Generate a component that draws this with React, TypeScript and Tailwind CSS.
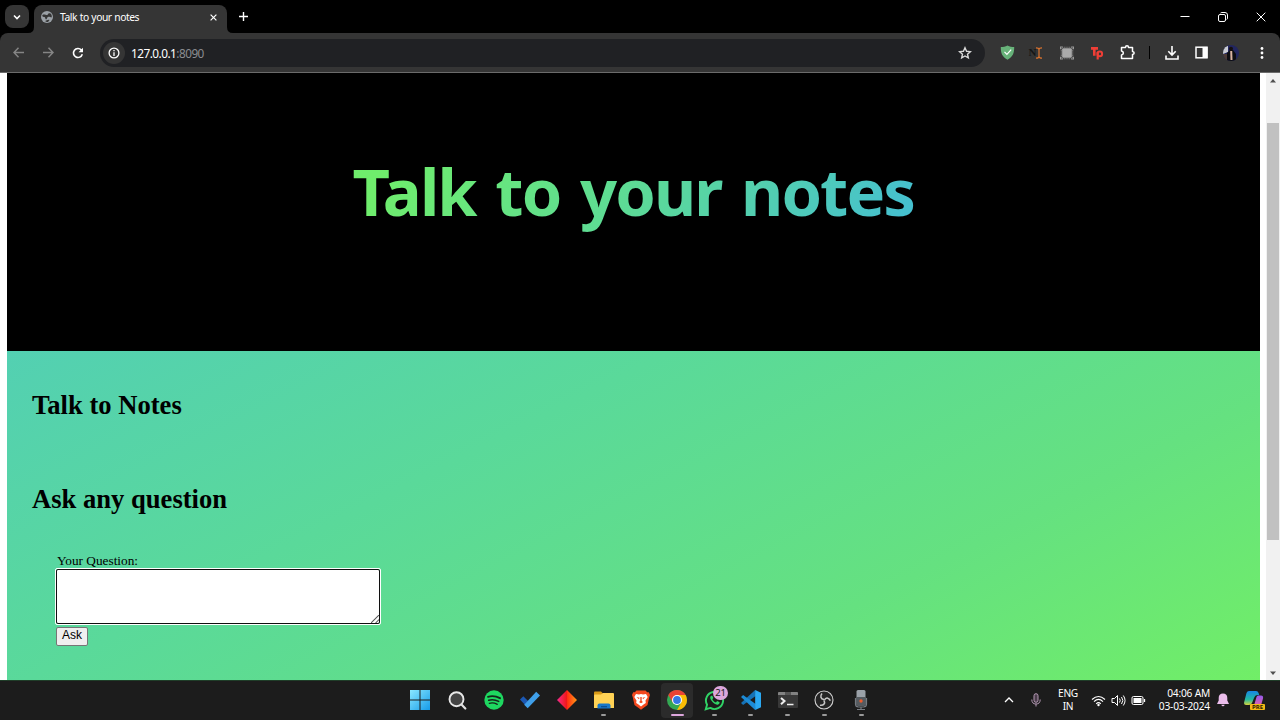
import type { ReactNode } from "react";

function Svg({ s = 16, vb = "0 0 24 24", className = "", children }: { s?: number; vb?: string; className?: string; children: ReactNode }) {
  return (
    <svg width={s} height={s} viewBox={vb} fill="none" className={`block shrink-0 ${className}`}>
      {children}
    </svg>
  );
}

function Slot({ children, className = "w-[30px]" }: { children: ReactNode; className?: string }) {
  return <div className={`flex h-8 shrink-0 items-center justify-center ${className}`}>{children}</div>;
}

function TabStrip() {
  return (
    <div className="flex h-[33px] shrink-0 items-start bg-black text-white">
      <div className="mt-[5px] ml-[5px] flex h-[23px] w-6 items-center justify-center rounded-[8px] bg-[#353535]">
        <Svg s={8} vb="0 0 8 8">
          <path d="M1 2.5 4 5.5 7 2.5" stroke="#fff" strokeWidth="1.6" />
        </Svg>
      </div>
      <div className="mt-[5px] flex h-[28px] items-end">
        <Svg s={6} vb="0 0 6 6" className="-ml-px">
          <path d="M6 0v6H0q6 0 6-6" fill="#353535" />
        </Svg>
        <div className="flex h-[28px] w-[193px] items-center rounded-t-[8px] bg-[#353535] pb-[4px] pl-[7px]">
          <Svg s={12} vb="0 0 24 24">
            <circle cx="12" cy="12" r="12" fill="#9aa0a6" />
            <path d="M4 7c5-1 6 2 9 1 1-3 3-4 6-3 3 3 3 6 2 8-3 0-4-2-7-1-3 1-1 4-4 5-2-1-1-4-3-5-2 0-4-1-5-2zM8 20c3-1 6-4 9-2l-3 4c-3 0-5-1-6-2z" fill="#353535" />
          </Svg>
          <span className="mt-px ml-[7px] w-[150px] font-['Noto_Sans','Open_Sans',sans-serif] text-[10.3px] tracking-[-0.45px] [word-spacing:0.4px] whitespace-nowrap">Talk to your notes</span>
          <Svg s={7} vb="0 0 7 7">
            <path d="M.6.6 6.4 6.4M6.4.6.6 6.4" stroke="#fff" strokeWidth="1.2" />
          </Svg>
        </div>
        <Svg s={6} vb="0 0 6 6">
          <path d="M0 0v6h6Q0 6 0 0" fill="#353535" />
        </Svg>
      </div>
      <Svg s={9} vb="0 0 9 9" className="mt-[12px] ml-[6px]">
        <path d="M4.5 0v9M0 4.5h9" stroke="#fff" strokeWidth="1.4" />
      </Svg>
      <div className="mr-[14px] ml-auto flex h-[33px] items-center gap-[28px]">
        <Svg s={10} vb="0 0 10 10">
          <path d="M.5 4.5h9" stroke="#fff" />
        </Svg>
        <Svg s={10} vb="0 0 10 10">
          <rect x=".5" y="2.5" width="7" height="7" rx="1.5" stroke="#fff" />
          <path d="M2.5 1Q3 .5 4 .5h3Q9.5.5 9.5 3v3q0 1-.8 1.6" stroke="#fff" />
        </Svg>
        <Svg s={10} vb="0 0 10 10">
          <path d="m.7.7 8.6 8.6M9.3.7.7 9.3" stroke="#fff" />
        </Svg>
      </div>
    </div>
  );
}

function Toolbar() {
  return (
    <div className="bg-black">
      <div className="flex h-[40px] items-center rounded-t-[8px] border-b border-[#6b6b6b] bg-[#353535] pl-[3px]">
        <Slot>
          <Svg s={11} vb="0 0 10 10">
            <path d="M5 .6.9 5 5 9.4M1 5h9" stroke="#858585" strokeWidth="1.3" />
          </Svg>
        </Slot>
        <Slot>
          <Svg s={11} vb="0 0 10 10">
            <path d="M5 .6 9.1 5 5 9.4M9 5H0" stroke="#858585" strokeWidth="1.3" />
          </Svg>
        </Slot>
        <Slot>
          <Svg s={12} vb="0 0 12 12">
            <path d="M10.3 7.3A4.5 4.5 0 1 1 9.3 2.9L10.5 4" stroke="#fff" strokeWidth="1.6" />
            <path d="M11 .8v4.5H6.5z" fill="#fff" />
          </Svg>
        </Slot>
        <div className="ml-[7px] flex h-[28px] w-[885px] items-center rounded-full bg-[#202124] pl-[3px]">
          <div className="flex size-[22px] items-center justify-center rounded-full bg-[#353535]">
            <Svg s={12} vb="0 0 12 12">
              <circle cx="6" cy="6" r="4.9" stroke="#fff" strokeWidth="1.3" />
              <path d="M6 5.2V9M6 3v1.3" stroke="#fff" strokeWidth="1.3" />
            </Svg>
          </div>
          <span className="mt-[2px] ml-[6px] font-['Noto_Sans','Open_Sans',sans-serif] text-[11.8px] tracking-[-0.52px] text-white">
            127.0.0.1<span className="text-[#8b8d91]">:8090</span>
          </span>
          <Svg s={14} vb="0 0 24 24" className="mr-[13px] ml-auto">
            <path d="m12 3 2.7 6 6.5.7-4.9 4.3 1.4 6.4L12 17.1l-5.7 3.3 1.4-6.4-4.9-4.3 6.5-.7z" stroke="#d8d8d8" strokeWidth="2.4" />
          </Svg>
        </div>
        <div className="ml-[7px] flex items-center">
          <Slot>
            <Svg s={15} vb="0 0 15 15">
              <path d="M7.5.4C9.5 1.5 12 2 14.2 2c0 6-1 9.5-6.7 12.7C1.8 11.5.8 8 .8 2 3 2 5.5 1.5 7.5.4z" fill="#67b279" />
              <path d="m4.5 6.8 2.4 2.5 4.3-4.7" stroke="#fff" strokeWidth="1.2" />
            </Svg>
          </Slot>
          <Slot>
            <div className="flex items-center">
              <span className="font-['Liberation_Serif',serif] text-[11px] leading-none font-bold text-[#161616]">N</span>
              <Svg s={12} vb="2 0 8 12" className="-ml-[3px]">
                <path d="M3 .8q3 0 3 1.700v7q0 1.700-3 1.700M9 .8q-3 0-3 1.700M9 11.200q-3 0-3-1.700" stroke="#d9722e" strokeWidth="1.2" />
              </Svg>
            </div>
          </Slot>
          <Slot>
            <Svg s={14} vb="0 0 13 13">
              <path d="M.5 3V1h2M10.5 1h2v2M12.5 10v2h-2M2.5 12h-2v-2" stroke="#999" />
              <rect x="2" y="2" width="9" height="9" rx="1" fill="#aaa" />
              <path d="M2 1.2h9M2 11.8h9M1.2 2v9M11.800 2v9" stroke="#909090" strokeDasharray="1 1" />
            </Svg>
          </Slot>
          <Slot>
            <Svg s={14} vb="0 0 14 14">
              <path d="M1 2.4h7M4.3 2.4v7.3" stroke="#ef3e36" strokeWidth="2.6" />
              <circle cx="9.800" cy="7.900" r="2.300" stroke="#ef3e36" strokeWidth="2" />
              <path d="M7.7 6v7.5" stroke="#ef3e36" strokeWidth="2.200" />
            </Svg>
          </Slot>
          <Slot>
            <Svg s={15} vb="0 0 15 15">
              <path d="M1.5 2.5h4c0-2.200 3-2.200 3 0h4v4c2.200.2 2.200 2.800 0 3v4h-11v-3.500c2.500-.3 2.500-3.500 0-4z" stroke="#fff" strokeWidth="1.5" strokeLinejoin="round" />
            </Svg>
          </Slot>
          <Slot className="w-[14px]">
            <div className="h-[13px] w-px bg-black" />
          </Slot>
          <Slot className="w-[31px]">
            <Svg s={14} vb="0 0 14 14">
              <path d="M7 0v8.5M3.3 5.3 7 9l3.7-3.7M1 9.5V13h12V9.5" stroke="#fff" strokeWidth="1.6" />
            </Svg>
          </Slot>
          <Slot className="w-[29px]">
            <Svg s={13} vb="0 0 13 13">
              <rect x="1" y="1.2" width="11" height="10.6" stroke="#fff" strokeWidth="1.5" />
              <path d="M7.5 1h5v11h-5z" fill="#fff" />
            </Svg>
          </Slot>
          <Slot>
            <Svg s={16} vb="0 0 16 16" className="overflow-hidden rounded-full">
              <path d="M0 0h16v16H0z" fill="#22265f" />
              <path d="M0 2 5 1v6L0 9z" fill="#c9ccd2" />
              <path d="M0 9h5v7H0z" fill="#4b3a36" />
              <path d="M4 16V8l3-3h3l3 4v7z" fill="#0d0d12" />
              <circle cx="8" cy="3.7" r="2" fill="#150f10" />
              <path d="m7.2 6 2 0 .3 9H7.5z" fill="#d9b3a2" />
            </Svg>
          </Slot>
          <Slot className="w-[31px]">
            <Svg s={14} vb="0 0 14 14">
              <g fill="#fff">
                <circle cx="7" cy="2.5" r="1.4" />
                <circle cx="7" cy="7" r="1.4" />
                <circle cx="7" cy="11.5" r="1.4" />
              </g>
            </Svg>
          </Slot>
        </div>
      </div>
    </div>
  );
}

function Page() {
  return (
    <div className="flex h-[607px] bg-white">
      <div className="ml-[7px] flex w-[1252.5px] flex-col">
        <div className="flex h-[278px] shrink-0 justify-center bg-black pt-[72px]">
          <h1 className="h-[92px] bg-linear-[120deg,#6fed6c_8%,#5cda98_52%,#45c0d0_97%] bg-clip-text font-['Noto_Sans','Open_Sans',sans-serif] text-[65px] leading-[92px] font-bold tracking-[-1.9px] [word-spacing:4.6px] whitespace-nowrap text-transparent">
            Talk to your notes
          </h1>
        </div>
        <div className="flex-1 bg-linear-[153deg,#53d0b2_0%,#5ad99a_35%,#65e180_71%,#71ee67_100%] pl-[25px] font-['Liberation_Serif','Times_New_Roman',serif] text-black">
          <h2 className="pt-[39px] text-[26.6px] leading-[30px] font-bold">Talk to Notes</h2>
          <h2 className="mt-[64px] text-[26.6px] leading-[30px] font-bold">Ask any question</h2>
          <form className="mt-[40px] flex flex-col items-start pl-[23px]" onSubmit={(e) => e.preventDefault()}>
            <label className="pl-[2px] text-[13.3px] leading-[14px]">Your Question:</label>
            <div className="rounded-[2px] border border-white">
              <div className="flex h-[55px] w-[324px] items-end justify-end rounded-[2px] border-[1.5px] border-[#101010] bg-white">
                <Svg s={8} vb="0 0 7 7">
                  <path d="M0 7 7 0M4 7l3-3" stroke="#555" strokeWidth=".9" />
                </Svg>
              </div>
            </div>
            <button className="mt-[2px] ml-px h-[19px] w-[32px] rounded-[2px] border border-[#767676] bg-[#efefef] pb-[2px] font-['Liberation_Sans',sans-serif] text-[12px] leading-[15px]">Ask</button>
          </form>
        </div>
      </div>
      <div className="ml-auto flex w-[14px] flex-col items-center bg-[#f1f1f1]">
        <Svg s={6} vb="0 0 6 6" className="mt-[5px]">
          <path d="M0 4.5 3 1l3 3.5z" fill="#505050" />
        </Svg>
        <div className="mt-[39px] h-[417px] w-[12px] bg-[#c1c1c1]" />
        <Svg s={6} vb="0 0 6 6" className="mt-auto mb-[4px]">
          <path d="M0 1.5 3 5l3-3.5z" fill="#505050" />
        </Svg>
      </div>
    </div>
  );
}

function TaskIcon({ children, state }: { children: ReactNode; state?: "open" | "active" }) {
  return (
    <div className={`relative flex h-[35px] w-[32px] shrink-0 items-center justify-center rounded-[4px] ${state === "active" ? "bg-[#2b2b2b]" : ""}`}>
      {children}
      {state === "open" && <span className="absolute bottom-[2px] h-[2px] w-[5px] rounded-full bg-[#9a9a9a]" />}
      {state === "active" && <span className="absolute bottom-[2px] h-[2px] w-[13px] rounded-full bg-[#dca6dc]" />}
    </div>
  );
}

function Taskbar() {
  return (
    <div className="flex h-[40px] items-center border-t border-[#1f3d28] bg-[#1c1c1c] pb-px font-['Noto_Sans','Open_Sans',sans-serif] text-white">
      <div className="ml-[404px] flex gap-[4.75px]">
        <TaskIcon>
          <Svg s={20} vb="0 0 20 20">
            <defs>
              <linearGradient id="win" x1="0" y1="0" x2="1" y2="1">
                <stop stopColor="#8be8ff" />
                <stop offset="1" stopColor="#159be8" />
              </linearGradient>
            </defs>
            <path d="M0 0h9.500v9.500H0zM10.500 0H20v9.500h-9.500zM0 10.500h9.500V20H0zM10.500 10.500H20V20h-9.500z" fill="url(#win)" />
          </Svg>
        </TaskIcon>
        <TaskIcon>
          <Svg s={19} vb="0 0 19 19" className="ml-px">
            <circle cx="8.5" cy="8.2" r="7" fill="#454545" stroke="#e8e8e8" strokeWidth="1.9" />
            <path d="m13.5 13.5 3.8 4" stroke="#e0e0e0" strokeWidth="2.2" strokeLinecap="round" />
          </Svg>
        </TaskIcon>
        <TaskIcon>
          <Svg s={20} vb="0 0 20 20">
            <circle cx="10" cy="10" r="9.7" fill="#1ed760" />
            <g stroke="#14251a" strokeLinecap="round">
              <path d="M4 6.8q6-1.8 12 1.4" strokeWidth="1.9" />
              <path d="M4.7 10.2q5-1.5 10 1.2" strokeWidth="1.5" />
              <path d="M5.3 13.3q4-1.1 8 1" strokeWidth="1.3" />
            </g>
          </Svg>
        </TaskIcon>
        <TaskIcon>
          <Svg s={20} vb="0 0 20 20">
            <path d="m0 9.5 3.3-3.3 6.5 6.5-3.3 3.800z" fill="#1c58b3" />
            <path d="M4.2 14.7 16.2 1.7 20 5.5 7.7 18.2z" fill="#3f9fe9" />
          </Svg>
        </TaskIcon>
        <TaskIcon>
          <Svg s={20} vb="0 0 20 20">
            <defs>
              <linearGradient id="dia" x1="0" y1="0" x2="1" y2="0">
                <stop stopColor="#f62a8c" />
                <stop offset=".49" stopColor="#ee1818" />
                <stop offset=".5" stopColor="#ff2a12" />
                <stop offset="1" stopColor="#ff9b16" />
              </linearGradient>
            </defs>
            <path d="m10 0 10 10-10 10L0 10z" fill="url(#dia)" />
          </Svg>
        </TaskIcon>
        <TaskIcon state="open">
          <Svg s={20} vb="0 0 20 20">
            <path d="M0 2.5Q0 1.500 1 1.500h6l2 2v3H0z" fill="#d99a17" />
            <path d="M1 4.500h6l2-1.500h10q1 0 1 1v14H0V5.500q0-1 1-1z" fill="#ffd255" />
            <path d="M3.500 18.500v-3q0-2 2-2h9q2 0 2 2v3z" fill="#1877c9" />
            <path d="M7 16h6v1.300H7z" fill="#0b4f92" />
          </Svg>
        </TaskIcon>
        <TaskIcon>
          <Svg s={20} vb="0 0 20 20">
            <path d="M5.500.5h9l1.700 1.800 1.600-.1L19 5l-.7 2L16.500 15 10 19.800 3.500 15 1.700 7 1 5l1.200-2.800 1.600.1z" fill="#f4481e" />
            <path d="m5 4 3 .5 2-.5 2 .5 3-.5 1.700 3-2.200 3.500.3 2.500-2.300 1.500L10 16.500 7.500 14.500 5.200 13l.3-2.500L3.300 7z" fill="#fff" />
            <path d="m5.500 7 3 .8-.5 1.500zM14.500 7l-3 .8.5 1.500zM9.300 7h1.400v4l1.300 1-2 1.300L8 12l1.300-1z" fill="#f4481e" />
          </Svg>
        </TaskIcon>
        <TaskIcon state="active">
          <Svg s={20} vb="0 0 20 20">
            <circle cx="10" cy="10" r="10" fill="#34a853" />
            <path d="M10 10 1.340 5A10 10 0 0 1 18.660 5z" fill="#ea4335" />
            <path d="M10 5h8.660A10 10 0 0 1 10 20L14.300 12.500z" fill="#fbbc05" />
            <path d="m1.340 5 4.330 7.500L10 10V5z" fill="#ea4335" />
            <circle cx="10" cy="10" r="5" fill="#fff" />
            <circle cx="10" cy="10" r="3.900" fill="#3478e5" />
          </Svg>
        </TaskIcon>
        <TaskIcon state="open">
          <Svg s={21} vb="0 0 24 24">
            <path d="M2 22 3.500 16.800A9.800 9.800 0 1 1 7.200 20.500z" stroke="#30d366" strokeWidth="2.200" />
            <path d="M8.200 6.500c-1.500 1-1.500 3 .2 5.600 2.500 3.700 5.600 5.300 7.800 4.500 1.400-.6 1.700-1.500 1.600-2.500l-2.800-1.400-1.400 1.600c-2-.8-3.200-2-4.100-3.800l1.200-1.400-1.200-2.600z" fill="#30d366" />
          </Svg>
          <span className="absolute top-[3px] left-[15px] flex h-[14px] w-[15px] items-center justify-center rounded-full bg-[#dca6dc] text-[9.500px] leading-none tracking-[-0.300px] text-[#202020]">21</span>
        </TaskIcon>
        <TaskIcon state="open">
          <Svg s={20} vb="0 0 24 24">
            <path d="M17 0 0 15.500l2.500 2.500L18 7z" fill="#1672b6" />
            <path d="M17 24 0 8.500 2.500 6 18 17z" fill="#1c8bd6" />
            <path d="m17 0 7 3.200v17.600L17 24z" fill="#2ba9f2" />
          </Svg>
        </TaskIcon>
        <TaskIcon state="open">
          <Svg s={20} vb="0 0 20 20">
            <rect x="0" y="2" width="20" height="16" rx="1" fill="#383838" />
            <path d="M0 3q0-1 1-1h18q1 0 1 1v2H0z" fill="#828282" />
            <path d="M7 2h6v3H7z" fill="#555" />
            <path d="m3 8 3.500 3L3 14.200" stroke="#eee" strokeWidth="2" />
            <path d="M9 14.500h6.500" stroke="#eee" strokeWidth="1.500" />
          </Svg>
        </TaskIcon>
        <TaskIcon state="open">
          <Svg s={20} vb="0 0 20 20">
            <circle cx="10" cy="10" r="9" fill="#252525" stroke="#d0d0d0" strokeWidth="1.100" />
            <g stroke="#c8c8c8" strokeWidth="1.500">
              <path d="M10 9.500C6.500 9 6 6 8 3.500" />
              <path d="M10.400 10.200c1.300-3.300 4.300-2.700 6 .5" />
              <path d="M9.700 10.400c2.200 2.800 0 5.400-3.700 4.900" />
            </g>
          </Svg>
        </TaskIcon>
        <TaskIcon state="open">
          <Svg s={22} vb="0 0 22 22">
            <path d="M5.500 9v6q0 3 3 3h5q3 0 3-3V9M11 18v2.500M7 20.500h8" stroke="#777c82" strokeWidth="1.200" />
            <rect x="6.500" y="1" width="9" height="15.500" rx="1.500" fill="#9aa1a8" />
            <path d="M6.500 8h9v7q0 1.500-1.500 1.500H8Q6.500 16.500 6.500 15z" fill="#555b60" />
            <circle cx="11" cy="12" r="1.700" fill="#ed5b2c" />
          </Svg>
        </TaskIcon>
      </div>
      <div className="mr-[16px] ml-auto flex items-center">
        <Svg s={10} vb="0 0 10 10">
          <path d="m1 7 4-4 4 4" stroke="#fff" strokeWidth="1.300" />
        </Svg>
        <Svg s={14} vb="0 0 14 14" className="ml-[15px]">
          <rect x="5" y=".7" width="4" height="8.600" rx="2" fill="#4b3d4b" stroke="#b59ab5" />
          <path d="M2.800 6.500q0 4.500 4.200 4.500t4.200-4.500M7 11v2.500" stroke="#b59ab5" />
        </Svg>
        <div className="ml-[12px] w-[26px] text-center text-[10.200px] leading-[13px] tracking-[-0.350px]">
          <div>ENG</div>
          <div>IN</div>
        </div>
        <Svg s={15} vb="0 0 15 15" className="ml-[10px]">
          <g stroke="#fff" strokeWidth="1.100">
            <path d="M1 6.500q6.500-6 13 0" />
            <path d="M3 8.700q4.500-4.500 9 0" />
            <path d="M5.200 10.800q2.300-2.400 4.600 0" />
          </g>
          <circle cx="7.500" cy="12" r="1.200" fill="#fff" />
        </Svg>
        <Svg s={15} vb="0 0 15 15" className="ml-[5px]">
          <path d="M1 5.500h2.500L6.500 2.500v10L3.500 9.500H1zM8.500 5.500q1.500 2 0 4M10.500 4q2.700 3.500 0 7M12.300 2.500q3.500 5 0 10" stroke="#fff" />
        </Svg>
        <Svg s={15} vb="0 0 15 15" className="ml-[5px]">
          <rect x="1" y="3.500" width="11" height="8" rx="1.500" stroke="#fff" />
          <rect x="2.500" y="5" width="8" height="5" fill="#fff" />
          <path d="M13.500 6v3" stroke="#fff" strokeWidth="1.300" />
        </Svg>
        <div className="ml-[10px] w-[54px] text-right text-[10.200px] leading-[13px] tracking-[-0.200px] whitespace-nowrap">
          <div>04:06 AM</div>
          <div>03-03-2024</div>
        </div>
        <Svg s={14} vb="0 0 14 14" className="ml-[6px]">
          <path d="M7 .5q4.300 0 4.300 4.500v2.500L13 11H1l1.700-3.500V5Q2.700.5 7 .5zM5.300 11.800h3.400q-.4 1.500-1.700 1.500t-1.700-1.500" fill="#ebbdeb" />
        </Svg>
        <div className="relative ml-[14px] size-[20px]">
          <Svg s={20} vb="0 0 20 20">
            <defs>
              <linearGradient id="ca" x1="0" y1="0" x2="0" y2="1">
                <stop stopColor="#1786e6" />
                <stop offset=".6" stopColor="#23b8a1" />
                <stop offset="1" stopColor="#d5d43c" />
              </linearGradient>
              <linearGradient id="cb" x1="0" y1="0" x2="0" y2="1">
                <stop stopColor="#9559ed" />
                <stop offset="1" stopColor="#f0649a" />
              </linearGradient>
            </defs>
            <path d="M5 1h7q2 0 2.600 2l.6 2h-2Q11 5 10 8l-2 5q-.8 2-3 2H2q-2.500 0-1.800-3L2.500 3Q3.200 1 5 1z" fill="url(#ca)" />
            <path d="M14 5.500h3q2.600 0 2 3l-2 7q-.7 2-3 2H8q1.500-.5 2-2l2.500-8.500Q13 5.500 14 5.500z" fill="url(#cb)" />
          </Svg>
          <span className="absolute -right-px bottom-0 flex h-[6px] w-[15px] items-center justify-center rounded-[1px] bg-[#f5b914] text-[6px] leading-none font-bold text-[#2a1c00]">PRE</span>
        </div>
      </div>
    </div>
  );
}

export default function App() {
  return (
    <div className="flex h-[720px] w-[1280px] flex-col overflow-hidden bg-black">
      <TabStrip />
      <Toolbar />
      <Page />
      <Taskbar />
    </div>
  );
}
